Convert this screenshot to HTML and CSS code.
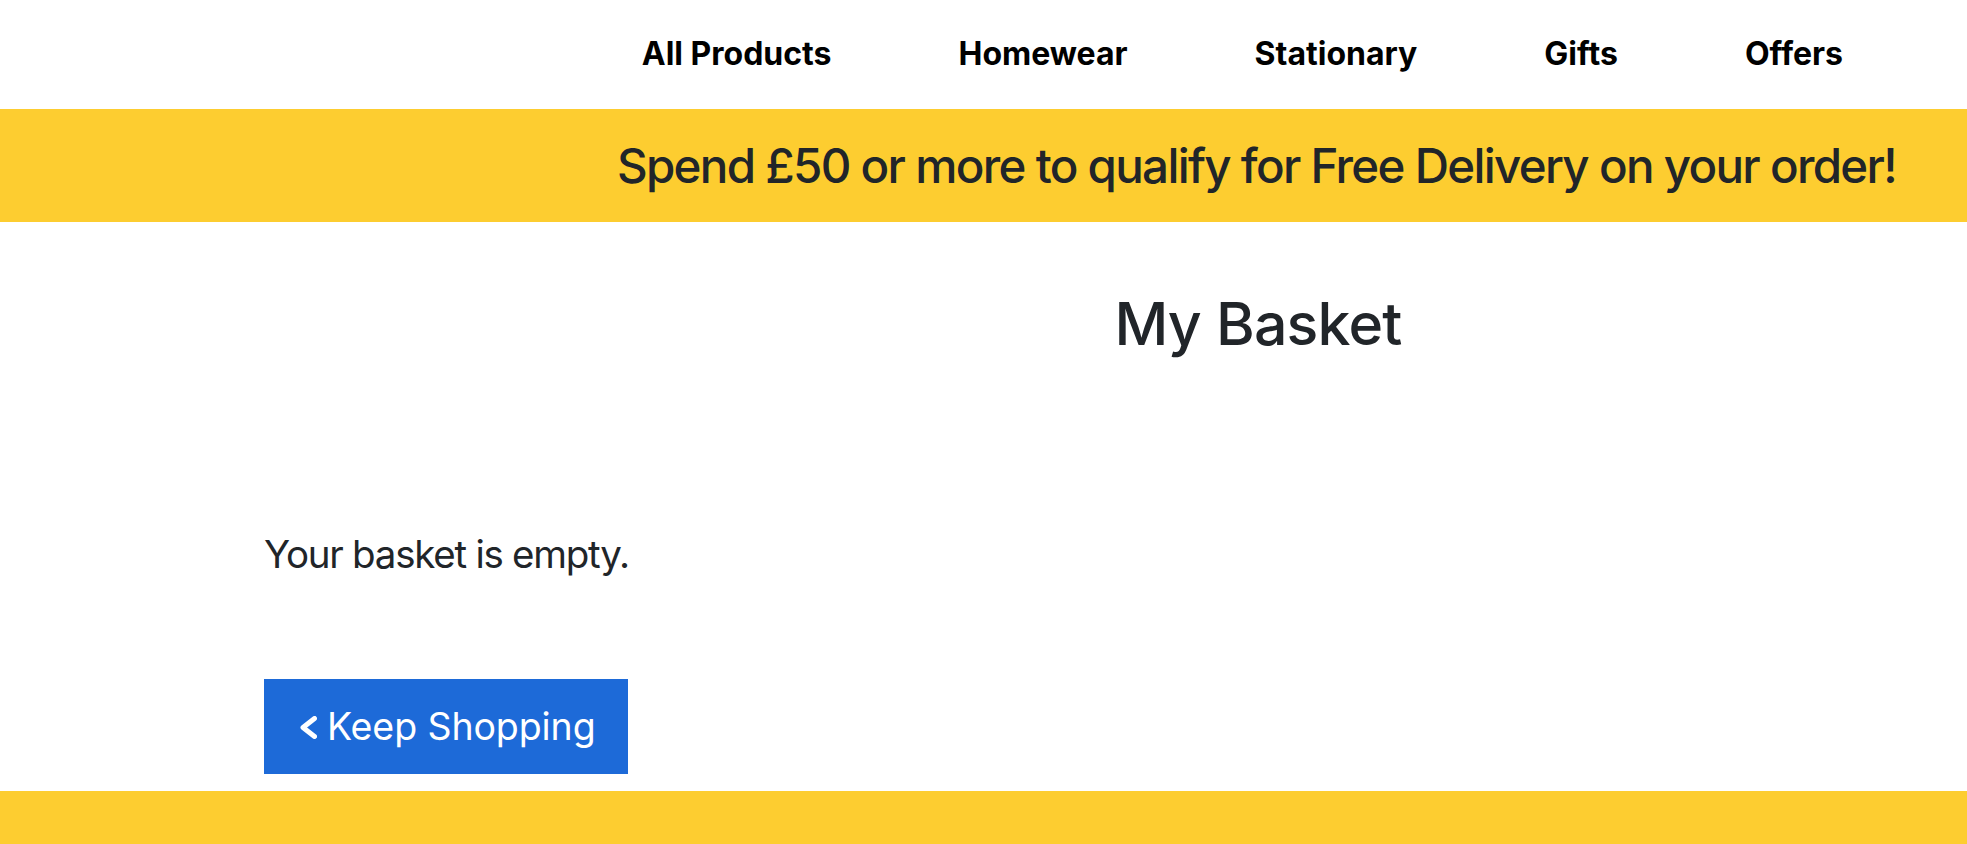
FILE: index.html
```html
<!DOCTYPE html>
<html lang="en">
<head>
<meta charset="utf-8">
<title>My Basket</title>
<link rel="stylesheet" href="styles.css">
</head>
<body>
<header class="site-nav">
  <nav class="nav-links">
    <a class="nav-link" href="#">All Products</a>
    <a class="nav-link" href="#">Homewear</a>
    <a class="nav-link" href="#">Stationary</a>
    <a class="nav-link" href="#">Gifts</a>
    <a class="nav-link" href="#">Offers</a>
  </nav>
</header>
<div class="promo-banner">
  <p class="promo-text">Spend £50 or more to qualify for Free Delivery on your order!</p>
</div>
<main class="basket">
  <h1 class="basket-title">My Basket</h1>
  <p class="basket-empty">Your basket is empty.</p>
  <a class="btn-keep" href="#">
    <svg class="chev" width="17" height="23" viewBox="0 0 17 23" aria-hidden="true"><polyline points="14.5,2.5 3,11.5 14.5,20.5" fill="none" stroke="#fff" stroke-width="5" stroke-linecap="round" stroke-linejoin="round"/></svg>
    <span class="btn-label">Keep Shopping</span>
  </a>
</main>
<footer class="site-footer"></footer>
</body>
</html>
```
FILE: styles.css
```css
html, body {
  margin: 0;
  padding: 0;
  overflow: hidden;
}
body {
  font-family: Inter, "Liberation Sans", sans-serif;
  color: #212529;
  background: #fff;
}
.site-nav {
  box-sizing: border-box;
  height: 109px;
  display: flex;
  align-items: center;
  justify-content: flex-end;
  padding: 0 124px 2px 0;
}
.nav-links {
  display: flex;
  gap: 127px;
}
.nav-link {
  font-size: 32px;
  font-weight: 700;
  color: #000;
  text-decoration: none;
}
.promo-banner {
  height: 113px;
  background: #fdcd30;
  display: flex;
  align-items: center;
  justify-content: flex-end;
  padding-right: 71px;
}
.promo-text {
  margin: 0;
  font-size: 47.5px;
  font-weight: 500;
  letter-spacing: -1.7px;
  color: #212529;
}
.basket {
  padding: 0 0 0 264px;
  display: flex;
  flex-direction: column;
  align-items: flex-start;
}
.basket-title {
  margin: 67px 0 0 -264px;
  align-self: stretch;
  text-align: center;
  padding-left: 549px;
  font-size: 59px;
  line-height: 70px;
  font-weight: 500;
  letter-spacing: -0.8px;
  color: #212529;
}
.basket-empty {
  margin: 172px 0 0 0;
  font-size: 38.5px;
  line-height: 46px;
  font-weight: 400;
  letter-spacing: -1.25px;
}
.btn-keep {
  margin-top: 102px;
  width: 364px;
  height: 95px;
  box-sizing: border-box;
  padding: 0 0 0 36px;
  background: #1d6ad8;
  color: #fff;
  text-decoration: none;
  white-space: nowrap;
  display: flex;
  align-items: center;
  gap: 10px;
}
.chev {
  flex: none;
  margin-top: 1px;
}
.btn-label {
  font-size: 37.5px;
  line-height: 44px;
  font-weight: 400;
  letter-spacing: -0.1px;
}
.site-footer {
  margin-top: 17px;
  height: 53px;
  background: #fdcd30;
}
```
